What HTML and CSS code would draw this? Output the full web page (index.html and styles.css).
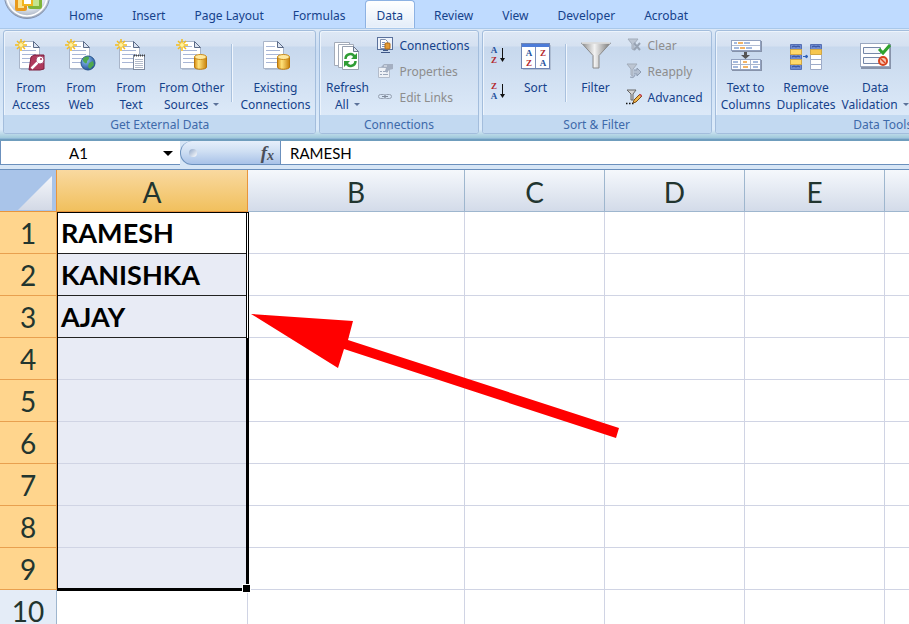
FILE: index.html
```html
<!DOCTYPE html>
<html lang="en">

<head>
    <meta charset="UTF-8">
    <meta name="viewport" content="width=device-width, initial-scale=1.0">
    <title>Spreadsheet</title>
    <link rel="stylesheet" href="styles.css">
</head>

<body>
    <!-- Shared icon parts -->
    <svg class="icon-defs" aria-hidden="true">
        <defs>
            <linearGradient id="gold" x1="0" x2="1" y1="0" y2="0">
                <stop offset="0" stop-color="#d58a10" />
                <stop offset="0.35" stop-color="#ffe27a" />
                <stop offset="1" stop-color="#c9820c" />
            </linearGradient>
            <linearGradient id="steel" x1="0" x2="1" y1="0" y2="0">
                <stop offset="0" stop-color="#8a8a8a" />
                <stop offset="0.45" stop-color="#f2f2f2" />
                <stop offset="1" stop-color="#777" />
            </linearGradient>
            <linearGradient id="fold" x1="0" x2="0" y1="0" y2="1">
                <stop offset="0" stop-color="#f4f6fa" />
                <stop offset="1" stop-color="#d3d9e6" />
            </linearGradient>
            <radialGradient id="orb" cx="0.5" cy="0.3" r="0.7">
                <stop offset="0" stop-color="#ffffff" />
                <stop offset="0.7" stop-color="#e0e6ee" />
                <stop offset="1" stop-color="#9aa6b8" />
            </radialGradient>
            <radialGradient id="globe" cx="0.35" cy="0.3" r="0.8">
                <stop offset="0" stop-color="#8fc4f5" />
                <stop offset="1" stop-color="#17468f" />
            </radialGradient>
            <symbol id="page" viewBox="0 0 32 32">
                <path d="M6 3h13l6 6v22H6z" fill="#8492a8" opacity="0.35" />
                <path d="M4.500 2.500h14l6 6v21h-20z" fill="#fff" stroke="#a9b5c9" />
                <path d="M18.500 2.500v6h6z" fill="#dbe3f0" stroke="#5b6b88" />
                <path d="M7 7.500h9M7 11.500h14M7 15.500h14M7 19.500h14M7 23.500h12" stroke="#a8b6d6" />
            </symbol>
            <symbol id="spark" viewBox="0 0 12 12">
                <path d="M6 0v12M0 6h12M2 2l8 8M10 2l-8 8" stroke="#f3bd1d" stroke-width="1.500" />
                <circle cx="6" cy="6" r="2" fill="#fff3a0" />
            </symbol>
            <symbol id="drum" viewBox="0 0 13 16">
                <path d="M0.500 3v10c0 3 12 3 12 0V3z" fill="url(#gold)" stroke="#b9770c" />
                <ellipse cx="6.500" cy="3" rx="6" ry="2.500" fill="#ffe9a0" stroke="#c98a1a" />
            </symbol>
            <symbol id="funnel" viewBox="0 0 32 32">
                <path d="M1.500 4h29L19 16.500V29h-6V16.500z" fill="url(#steel)" stroke="#8a8a8a" />
                <path d="M2 4h28" stroke="#e8e8e8" stroke-width="1.500" />
            </symbol>
        </defs>
    </svg>

    <div class="app">
        <header class="tab-bar">
            <button class="office-button" aria-label="Office Button">
                <svg width="48" height="48" viewBox="0 0 48 48">
                    <circle cx="24" cy="24" r="22.500" fill="url(#orb)" stroke="#8492ad" />
                    <circle cx="24" cy="24" r="20" fill="none" stroke="#fff" stroke-width="1.500" />
                    <rect x="13.500" y="26.500" width="9" height="11" rx="1" fill="#fbe18a" stroke="#e8991c" stroke-width="3" />
                    <rect x="26.500" y="24.500" width="11" height="11" rx="1" fill="#c5e58d" stroke="#7fb53a" stroke-width="3" />
                    <rect x="20" y="27" width="9" height="6" fill="#fff" stroke="#f1b51c" stroke-width="2" />
                </svg>
            </button>
            <nav class="tabs">
                <button class="tab">Home</button>
                <button class="tab">Insert</button>
                <button class="tab">Page Layout</button>
                <button class="tab">Formulas</button>
                <button class="tab active">Data</button>
                <button class="tab">Review</button>
                <button class="tab">View</button>
                <button class="tab">Developer</button>
                <button class="tab">Acrobat</button>
            </nav>
        </header>

        <div class="ribbon">
            <section class="group">
                <div class="group-body">
                    <button class="big-button">
                        <svg class="icon" viewBox="0 0 32 32">
                            <use href="#page" width="32" height="32" />
                            <use href="#spark" width="12" height="12" />
                            <path d="M16 18l3-2h10v14l-4 1H14z" fill="#b03a5c" stroke="#7d1f3e" />
                            <circle cx="25" cy="21" r="4" fill="#fff" stroke="#a8466a" />
                            <path d="M22.500 23.500l-6 6" stroke="#fff" stroke-width="2.500" />
                            <circle cx="26" cy="20" r="1" fill="#a8345a" />
                        </svg>
                        <span>From<br>Access</span>
                    </button>
                    <button class="big-button">
                        <svg class="icon" viewBox="0 0 32 32">
                            <use href="#page" width="32" height="32" />
                            <use href="#spark" width="12" height="12" />
                            <circle cx="23" cy="24" r="7" fill="url(#globe)" stroke="#28558c" />
                            <path d="M18 20c2-3 6-3 6-1s-2 2-2 4-2 2-4-1zM24 24l4-2 1 4-4 4-2-2z" fill="#4fa84c" />
                        </svg>
                        <span>From<br>Web</span>
                    </button>
                    <button class="big-button">
                        <svg class="icon" viewBox="0 0 32 32">
                            <use href="#page" width="32" height="32" />
                            <use href="#spark" width="12" height="12" />
                            <rect x="18.500" y="16.500" width="11" height="14" fill="#fff" stroke="#7d8aa0" />
                            <path d="M19 16.500h11" stroke="#444" stroke-width="2" stroke-dasharray="1 1" />
                            <path d="M20 20.500h8M20 22.500h8M20 24.500h8M20 26.500h8M20 28.500h8" stroke="#b4bccb" />
                        </svg>
                        <span>From<br>Text</span>
                    </button>
                    <button class="big-button">
                        <svg class="icon" viewBox="0 0 32 32">
                            <use href="#page" width="32" height="32" />
                            <use href="#spark" width="12" height="12" />
                            <use href="#drum" x="18" y="15" width="13" height="16" />
                        </svg>
                        <span>From Other<br>Sources <i class="caret"></i></span>
                    </button>
                    <div class="divider"></div>
                    <button class="big-button">
                        <svg class="icon" viewBox="0 0 32 32">
                            <use href="#page" width="32" height="32" />
                            <use href="#drum" x="18" y="15" width="13" height="16" />
                        </svg>
                        <span>Existing<br>Connections</span>
                    </button>
                </div>
                <h2 class="group-label">Get External Data</h2>
            </section>

            <section class="group">
                <div class="group-body">
                    <button class="big-button">
                        <svg class="icon" viewBox="0 0 32 32">
                            <path d="M3.500 3.500h15v23h-15z" fill="#fff" stroke="#a3abb8" />
                            <path d="M7.500 5.500h15v23h-15z" fill="#fff" stroke="#a3abb8" />
                            <path d="M11.500 7.500h11l5 5v18h-16z" fill="#fff" stroke="#98a1b0" />
                            <path d="M22.500 7.500v5h5z" fill="#dfe5ee" stroke="#6b7890" />
                            <path d="M14.500 20c0-5 7-7 9-2M24.500 22c0 5-7 7-9 2" fill="none" stroke="#2f9d35" stroke-width="2.500" />
                            <path d="M26 14v6h-6zM13 28v-6h6z" fill="#2f9d35" />
                        </svg>
                        <span>Refresh<br>All <i class="caret"></i></span>
                    </button>
                    <div class="small-stack">
                        <button class="small-button">
                            <svg class="icon-small" viewBox="0 0 16 16">
                                <rect x="0.500" y="0.500" width="15" height="12" fill="#eef3fb" stroke="#5a719c" />
                                <path d="M4 15.500h9M6 13.500h5" stroke="#3e5787" />
                                <path d="M3.500 2.500h5l2 2v7h-7z" fill="#fff" stroke="#8291ad" />
                                <path d="M5 5.500h3M5 7.500h3M5 9.500h3" stroke="#7e93c0" />
                                <rect x="8" y="6" width="5" height="6" rx="1" fill="#e39a34" stroke="#b06a16" />
                            </svg>
                            Connections
                        </button>
                        <button class="small-button" disabled>
                            <svg class="icon-small" viewBox="0 0 16 16">
                                <path d="M1.500 4.500h11v10h-11z" fill="#eef1f6" stroke="#b3bccb" />
                                <path d="M3 8.500h2M3 11.500h2M6 8.500h5M6 11.500h5" stroke="#9ba7bb" />
                                <path d="M4 4l3-3h9v5l-4 1-2 3-2-2 1-3z" fill="#a4afc1" />
                                <path d="M7 3h3" stroke="#e9eef5" />
                            </svg>
                            Properties
                        </button>
                        <button class="small-button" disabled>
                            <svg class="icon-small" viewBox="0 0 16 16">
                                <rect x="1.500" y="5.500" width="7" height="4" rx="2" fill="none" stroke="#96a1b2" />
                                <rect x="7.500" y="5.500" width="7" height="4" rx="2" fill="none" stroke="#96a1b2" />
                                <path d="M5 7.500h6" stroke="#7e8999" />
                            </svg>
                            Edit Links
                        </button>
                    </div>
                </div>
                <h2 class="group-label">Connections</h2>
            </section>

            <section class="group">
                <div class="group-body">
                    <div class="sort-stack">
                        <button class="sort-button" aria-label="Sort A to Z">
                            <svg width="16" height="20" viewBox="0 0 16 20">
                                <text class="letter blue" x="4" y="8">A</text>
                                <text class="letter red" x="4" y="18">Z</text>
                                <path d="M12.500 3v12" stroke="#111" />
                                <path d="M10 13h5l-2.500 4z" fill="#111" />
                            </svg>
                        </button>
                        <button class="sort-button" aria-label="Sort Z to A">
                            <svg width="16" height="20" viewBox="0 0 16 20">
                                <text class="letter red" x="4" y="8">Z</text>
                                <text class="letter blue" x="4" y="18">A</text>
                                <path d="M12.500 3v12" stroke="#111" />
                                <path d="M10 13h5l-2.500 4z" fill="#111" />
                            </svg>
                        </button>
                    </div>
                    <button class="big-button">
                        <svg class="icon" viewBox="0 0 32 32">
                            <rect x="3" y="6" width="28" height="25" fill="#8492a8" opacity="0.400" />
                            <rect x="1.500" y="4.500" width="28" height="25" fill="#fff" stroke="#6d84b4" />
                            <rect x="2" y="5" width="27" height="3" fill="#4c7bd8" />
                            <path d="M15.500 8v21" stroke="#7a8fbb" />
                            <text class="letter blue" x="9" y="17">A</text>
                            <text class="letter red" x="9" y="27">Z</text>
                            <text class="letter red" x="23" y="17">Z</text>
                            <text class="letter blue" x="23" y="27">A</text>
                        </svg>
                        <span>Sort</span>
                    </button>
                    <div class="divider"></div>
                    <button class="big-button">
                        <svg class="icon" viewBox="0 0 32 32">
                            <use href="#funnel" width="32" height="32" />
                        </svg>
                        <span>Filter</span>
                    </button>
                    <div class="small-stack">
                        <button class="small-button" disabled>
                            <svg class="icon-small" viewBox="0 0 16 16">
                                <path d="M2 2h10L8 7v6l-2-1V7z" fill="#bdc6d3" stroke="#a3adbb" />
                                <path d="M8 6l6 7M14 6l-6 7" stroke="#98a3b3" stroke-width="2" />
                            </svg>
                            Clear
                        </button>
                        <button class="small-button" disabled>
                            <svg class="icon-small" viewBox="0 0 16 16">
                                <path d="M1 1h10L7 6v7l-2-1V6z" fill="#bdc6d3" stroke="#a3adbb" />
                                <path d="M8 7h3V5l4 4-4 4v-2H8M9 12c-1 3-3 3-5 2" fill="#b3bfd0" stroke="#8d9bb0" />
                            </svg>
                            Reapply
                        </button>
                        <button class="small-button">
                            <svg class="icon-small" viewBox="0 0 16 16">
                                <path d="M1 1h9L7 5v6H5V5z" fill="#d5d5d5" stroke="#666" />
                                <path d="M0 14.500h8" stroke="#111" stroke-width="1.500" stroke-dasharray="1.500 1.500" />
                                <path d="M7 14l1-3 6-6 2 2-6 6z" fill="#f2b84c" stroke="#7a4d17" />
                                <path d="M13 6l2 2 1-2-2-1z" fill="#d3566b" />
                            </svg>
                            Advanced
                        </button>
                    </div>
                </div>
                <h2 class="group-label">Sort &amp; Filter</h2>
            </section>

            <section class="group data-tools">
                <div class="group-body">
                    <button class="big-button">
                        <svg class="icon" viewBox="0 0 32 32">
                            <rect x="2" y="2" width="30" height="11" fill="#8793aa" />
                            <rect x="1.500" y="1.500" width="29" height="10" fill="#fff" stroke="#92a1be" />
                            <path d="M2 6.500h28" stroke="#b1bdd4" />
                            <path d="M4 4h3M14 4h6M4 9h5M16 9h6" stroke="#4c76bd" />
                            <path d="M8 4h5M10 9h5" stroke="#ee9c35" stroke-width="1.500" />
                            <path d="M14 13h3v3h3l-4.500 4-4.500-4h3z" fill="#555" />
                            <rect x="2" y="21" width="30" height="11" fill="#8793aa" />
                            <rect x="1.500" y="20.500" width="29" height="10" fill="#fff" stroke="#92a1be" />
                            <path d="M2 25.500h28M10.500 21v9M20.500 21v9" stroke="#a9b6ce" />
                            <path d="M3 23h5M3 28h5M23 23h5M23 28h5" stroke="#4c76bd" />
                            <path d="M13 23h4M13 28h5" stroke="#ee9c35" stroke-width="1.500" />
                        </svg>
                        <span>Text to<br>Columns</span>
                    </button>
                    <button class="big-button">
                        <svg class="icon" viewBox="0 0 32 32">
                            <path d="M0.500 5.500h11v5h-11zM0.500 15.500h11v5h-11zM0.500 25.500h11v5h-11z" fill="#6f8bd0" stroke="#5670b4" />
                            <path d="M0.500 10.500h11v5h-11zM0.500 20.500h11v5h-11z" fill="#ffd96b" stroke="#d2a744" />
                            <path d="M2 8l2-1 2 1 2-1 2 1M2 18l2-1 2 1 2-1 2 1M2 28l2-1 2 1 2-1 2 1" fill="none" stroke="#2f4c97" />
                            <path d="M13 17.500h4M16 16v3l2-1.500z" fill="#2c60b8" stroke="#2c60b8" />
                            <path d="M20.500 15.500h11v5h-11zM20.500 20.500h11v5h-11zM20.500 25.500h11v5h-11z" fill="#fff" stroke="#9dabc8" />
                            <path d="M20.500 5.500h11v5h-11z" fill="#6f8bd0" stroke="#5670b4" />
                            <path d="M20.500 10.500h11v5h-11z" fill="#f6c64e" stroke="#d2a744" />
                            <path d="M22 8l2-1 2 1 2-1 2 1" fill="none" stroke="#2f4c97" />
                        </svg>
                        <span>Remove<br>Duplicates</span>
                    </button>
                    <button class="big-button">
                        <svg class="icon" viewBox="0 0 32 32">
                            <rect x="2" y="5" width="30" height="25" fill="#8793aa" />
                            <rect x="1.500" y="4.500" width="29" height="23" fill="#fff" stroke="#9aa7bf" />
                            <path d="M4.500 8.500h17v6h-17zM4.500 18.500h17v6h-17z" fill="#f6f8fc" stroke="#7587a8" />
                            <path d="M20 10l4 4 7-8" fill="none" stroke="#2fa32f" stroke-width="3" />
                            <circle cx="24" cy="22" r="4" fill="#f8c6b4" stroke="#d8431e" stroke-width="2" />
                            <path d="M22 20l4 4" stroke="#d8431e" stroke-width="1.500" />
                        </svg>
                        <span>Data<br>Validation <i class="caret"></i></span>
                    </button>
                </div>
                <h2 class="group-label">Data Tools</h2>
            </section>
        </div>

        <div class="formula-bar">
            <div class="name-box">
                <input type="text" value="A1" aria-label="Name Box">
                <button class="name-arrow" aria-label="Show names"><i class="caret"></i></button>
            </div>
            <div class="fx-pill">
                <i class="knob"></i>
                <button class="fx-button" aria-label="Insert Function">f<sub>x</sub></button>
            </div>
            <input class="formula-input" type="text" value="RAMESH" aria-label="Formula">
        </div>

        <main class="sheet">
            <table class="grid">
                <colgroup>
                    <col class="col-head">
                    <col class="col-a">
                    <col class="col-b">
                    <col class="col-std">
                    <col class="col-std">
                    <col class="col-std">
                    <col>
                </colgroup>
                <thead>
                    <tr>
                        <th class="corner"><svg width="34" height="34" viewBox="0 0 34 34"><path d="M34 0v34H0z" fill="url(#fold)" /></svg></th>
                        <th class="selected">A</th>
                        <th>B</th>
                        <th>C</th>
                        <th>D</th>
                        <th>E</th>
                        <th></th>
                    </tr>
                </thead>
                <tbody>
                    <tr><th class="selected">1</th><td class="filled current">RAMESH<div class="selection"></div></td><td></td><td></td><td></td><td></td><td></td></tr>
                    <tr><th class="selected">2</th><td class="picked filled">KANISHKA</td><td></td><td></td><td></td><td></td><td></td></tr>
                    <tr><th class="selected">3</th><td class="picked filled">AJAY</td><td></td><td></td><td></td><td></td><td></td></tr>
                    <tr><th class="selected">4</th><td class="picked"></td><td></td><td></td><td></td><td></td><td></td></tr>
                    <tr><th class="selected">5</th><td class="picked"></td><td></td><td></td><td></td><td></td><td></td></tr>
                    <tr><th class="selected">6</th><td class="picked"></td><td></td><td></td><td></td><td></td><td></td></tr>
                    <tr><th class="selected">7</th><td class="picked"></td><td></td><td></td><td></td><td></td><td></td></tr>
                    <tr><th class="selected">8</th><td class="picked"></td><td></td><td></td><td></td><td></td><td></td></tr>
                    <tr><th class="selected">9</th><td class="picked"></td><td></td><td></td><td></td><td></td><td></td></tr>
                    <tr><th>10</th><td></td><td></td><td></td><td></td><td></td><td></td></tr>
                </tbody>
            </table>
            <svg class="pointer" width="368" height="126" viewBox="0 0 368 126">
                <path d="M0 1L102 8L97 27L368 115L365 125L93 36L87 55z" fill="#ff0000" />
            </svg>
        </main>
    </div>
</body>

</html>
```

FILE: styles.css
```css
* {
    box-sizing: border-box;
}

body {
    margin: 0;
    font-family: "Noto Sans", "Open Sans", sans-serif;
    font-size: 12px;
    color: #15428b;
    background-color: #fff;
}

button,
input {
    margin: 0;
    padding: 0;
    border: none;
    background: none;
    font: inherit;
    color: inherit;
}

.app {
    height: 100vh;
    display: flex;
    flex-direction: column;
    overflow: hidden;
}

.icon-defs {
    position: absolute;
    width: 0;
    height: 0;
}

/* Tabs */

.tab-bar {
    display: flex;
    flex: none;
    height: 28px;
    padding-left: 55px;
    position: relative;
    background-color: #bfdbff;
}

.office-button {
    position: absolute;
    left: 3px;
    top: -28px;
    height: 48px;
}

.tabs {
    display: flex;
    gap: 1px;
}

.tab {
    height: 28px;
    padding: 3px 14px 0;
    white-space: nowrap;
}

.tab.active {
    margin: 0 4px;
    padding: 2px 11px 0;
    border: 1px solid #8db2e3;
    border-bottom: none;
    border-radius: 4px 4px 0 0;
    background: linear-gradient(#ffffff, #e3edf9);
    box-shadow: inset 0 0 2px #fff;
}

/* Ribbon */

.ribbon {
    display: flex;
    flex: none;
    gap: 3px;
    height: 111px;
    padding: 1px 3px 4px;
    border-top: 1px solid #a9c8ea;
    border-bottom: 1px solid #8fb7d6;
    background: linear-gradient(#dce8f6, #c9dcf3 20%, #dcebfa 92%, #9fc9da);
}

.group {
    flex: none;
    display: flex;
    flex-direction: column;
    border: 1px solid #a3bddc;
    border-radius: 3px;
    overflow: hidden;
    background: linear-gradient(#dee8f5 0, #d5e1f1 15px, #c7d8ed 16px, #dce9f8 84px);
    box-shadow: inset 1px 1px 0 #edf4fc;
}

.data-tools {
    width: 336px;
}

.group-body {
    flex: 1;
    display: flex;
    align-items: flex-start;
    padding: 1px 2px 0;
}

.group-label {
    margin: 0;
    height: 18px;
    line-height: 20px;
    font-size: 12px;
    font-weight: normal;
    text-align: center;
    color: #3e6aaa;
    background-color: #c2d9f1;
}

.big-button {
    display: flex;
    flex-direction: column;
    align-items: center;
    min-width: 50px;
    padding: 7px 3px 0;
    line-height: 17px;
    white-space: nowrap;
}

.icon {
    width: 32px;
    height: 32px;
    margin-bottom: 8px;
}

.icon-small {
    width: 16px;
    height: 16px;
}

.divider {
    width: 2px;
    height: 58px;
    margin: 12px 4px 0;
    border-left: 1px solid #a9c1de;
    border-right: 1px solid #f0f6fd;
}

.caret {
    display: inline-block;
    margin-left: 2px;
    vertical-align: 3px;
    border: 3px solid transparent;
    border-top-color: #5c7299;
    border-bottom: none;
}

.small-stack {
    display: flex;
    flex-direction: column;
}

.small-button {
    display: flex;
    align-items: center;
    gap: 6px;
    height: 26px;
    padding: 0 6px 0 5px;
    white-space: nowrap;
}

.small-button:disabled {
    color: #8d8d8d;
}

.sort-stack {
    display: flex;
    flex-direction: column;
    gap: 16px;
    padding: 13px 5px 0;
}

.sort-button {
    display: flex;
}

.letter {
    font-family: "Liberation Serif", serif;
    font-size: 9px;
    font-weight: bold;
    text-anchor: middle;
}

.blue {
    fill: #24509c;
}

.red {
    fill: #b3282d;
}

/* Formula bar */

.formula-bar {
    display: flex;
    flex: none;
    height: 31px;
    padding-bottom: 4px;
    border-top: 2px solid #6f9dbd;
    border-bottom: 1px solid #6b90bd;
    background-color: #d7e6f6;
    font-family: "Lato", sans-serif;
    font-size: 15px;
    color: #000;
}

.name-box {
    display: flex;
    width: 180px;
    border-left: 1px solid #6b90bd;
    border-bottom: 1px solid #6b90bd;
    background-color: #fff;
}

.name-box input {
    flex: 1;
    min-width: 0;
    text-align: center;
}

.name-arrow {
    width: 24px;
}

.name-arrow .caret {
    margin: 0;
    border-width: 5px;
    border-bottom: none;
    border-top-color: #000;
}

.fx-pill {
    display: flex;
    align-items: center;
    justify-content: space-between;
    width: 101px;
    padding: 0 6px 0 8px;
    border: 1px solid #6b90bd;
    border-top: none;
    border-radius: 12px 0 0 12px;
    background: linear-gradient(#e6effb, #cfdff3 45%, #a8c2e8);
}

.knob {
    width: 8px;
    height: 8px;
    border-radius: 50%;
    background: linear-gradient(135deg, #8fa6c8, #fff);
}

.fx-button {
    font-family: "Liberation Serif", serif;
    font-size: 19px;
    line-height: 19px;
    font-style: italic;
    font-weight: bold;
    color: #4a4f5a;
}

.fx-button sub {
    font-size: 14px;
    line-height: 0;
    vertical-align: -1px;
}

.formula-input {
    flex: 1;
    min-width: 0;
    padding-left: 9px;
    border-bottom: 1px solid #6b90bd;
    background-color: #fff;
}

/* Sheet */

.sheet {
    flex: 1;
    min-height: 0;
    position: relative;
    overflow: hidden;
    font-family: "Lato", sans-serif;
    font-size: 28px;
    line-height: 34px;
    color: #000;
}

.grid {
    width: 100%;
    table-layout: fixed;
    border-collapse: separate;
    border-spacing: 0;
}

.col-head {
    width: 57px;
}

.col-a {
    width: 191px;
}

.col-b {
    width: 217px;
}

.col-std {
    width: 140px;
}

.grid th,
.grid td {
    height: 42px;
    padding: 0;
    border-right: 1px solid #d0d4e4;
    border-bottom: 1px solid #d0d4e4;
}

.grid th {
    font-weight: normal;
    text-align: center;
    color: #22352f;
    border-color: #9eb6ce;
}

.grid thead th {
    padding-top: 2px;
    background: linear-gradient(#f5f8fc, #d3dbe9);
}

.grid tbody th {
    background-color: #e4ecf7;
}

.grid thead .selected {
    border-color: #e8953c;
    background: linear-gradient(#f9d9a0, #f1c05d);
}

.grid tbody .selected {
    border-color: #e8a04f;
    background-color: #ffd58d;
}

.grid thead .corner {
    padding: 4px 4px 0 0;
    border-color: #e8953c;
    background: #a9c4e9;
    text-align: right;
    line-height: 0;
}

.grid td {
    padding-left: 4px;
    font-size: 27px;
    font-weight: bold;
}

.grid tr > :last-child {
    border-right: none;
}

.grid .picked {
    background-color: #e8ebf5;
}

.grid .filled {
    border-bottom-color: #222;
}

.grid .current {
    position: relative;
}

/* Frame round the nine selected cells, with its fill handle */
.selection {
    position: absolute;
    top: 0;
    left: 0;
    width: 192px;
    height: 379px;
    border: 1px solid #000;
    border-right-width: 3px;
    border-bottom-width: 3px;
}

/* White core where the frame runs beside the filled cells */
.selection::before {
    content: "";
    position: absolute;
    top: 0;
    right: -2px;
    width: 1px;
    height: 125px;
    background-color: #fff;
}

.selection::after {
    content: "";
    position: absolute;
    right: -5px;
    bottom: -5px;
    width: 7px;
    height: 7px;
    border: 1px solid #fff;
    background-color: #000;
}

.pointer {
    position: absolute;
    left: 251px;
    top: 143px;
}
```
